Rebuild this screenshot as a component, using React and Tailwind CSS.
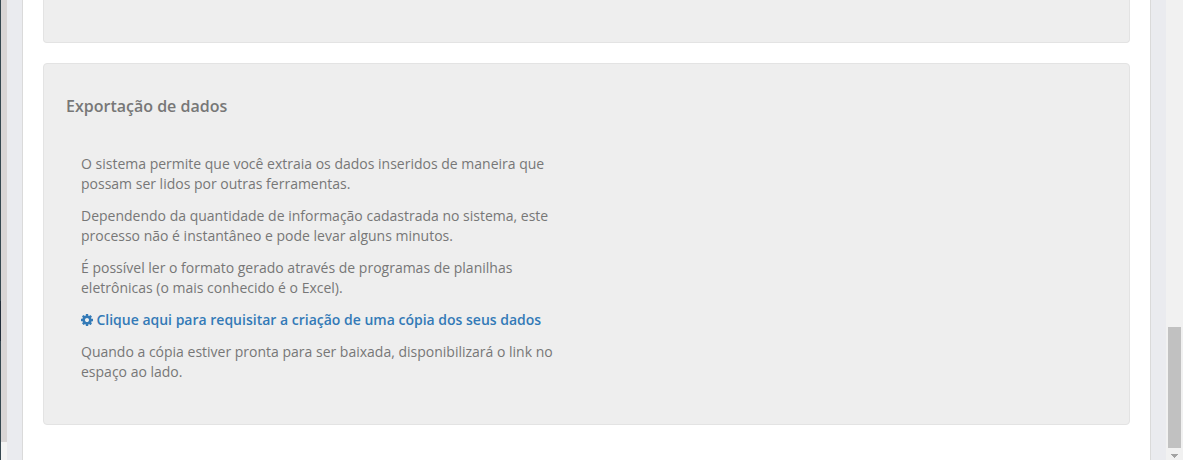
const paragraphs = [
  ["O sistema permite que você extraia os dados inseridos de maneira que", "possam ser lidos por outras ferramentas."],
  ["Dependendo da quantidade de informação cadastrada no sistema, este", "processo não é instantâneo e pode levar alguns minutos."],
  ["É possível ler o formato gerado através de programas de planilhas", "eletrônicas (o mais conhecido é o Excel)."],
];

function Paragraph({ lines }) {
  return (
    <p className="mb-3 whitespace-nowrap">
      {lines[0]}
      <br />
      {lines[1]}
    </p>
  );
}

function GearIcon({ className }) {
  return (
    <svg className={className} viewBox="0 128 1536 1536" fill="currentColor" aria-hidden="true">
      <path d="M1024 896q0-106-75-181t-181-75-181 75-75 181 75 181 181 75 181-75 75-181zm512-109v222q0 12-8 23t-20 13l-185 28q-19 54-39 91 35 50 107 138 10 12 10 25t-9 23q-27 37-99 108t-94 71q-12 0-26-9l-138-108q-44 23-91 38-16 136-29 186-7 28-36 28h-222q-14 0-24.5-8.5t-11.5-21.5l-28-184q-49-16-90-37l-141 107q-10 9-25 9-14 0-25-11-126-114-165-168-7-10-7-23 0-12 8-23 15-21 51-66.5t54-70.5q-27-50-41-99l-183-27q-13-2-21-12.5t-8-23.5v-222q0-12 8-23t19-13l186-28q14-46 39-92-40-57-107-138-10-12-10-24 0-10 9-23 26-36 98.5-107.5t94.5-71.5q13 0 26 10l138 107q44-23 91-38 16-136 29-186 7-28 36-28h222q14 0 24.5 8.5t11.5 21.5l28 184q49 16 90 37l142-107q9-9 24-9 13 0 25 10 129 119 165 170 7 8 7 22 0 12-8 23-15 21-51 66.5t-54 70.5q26 50 41 98l183 28q13 2 21 12.5t8 23.5z" />
    </svg>
  );
}

export default function App() {
  return (
    <div className="flex h-[460px] w-[1183px] overflow-hidden bg-[#eaebef] font-['Open_Sans',sans-serif] text-sm leading-5 text-[#777777]">
      <div className="flex w-px shrink-0 flex-col bg-[#364750]">
        <div className="mt-[301px] h-10 bg-[#222d3a]" />
      </div>
      <div className="flex w-[6px] shrink-0 flex-col bg-[#f4f4f4]">
        <div className="h-[442px] bg-[#d9d5d5]" />
      </div>
      <div className="w-[15px] shrink-0" />
      <main className="w-[1129px] shrink-0 border-x border-[#dadada] bg-white px-5">
        <div className="h-[43px] w-[1087px] rounded-b-[4px] border border-t-0 border-[#e3e3e3] bg-[#eeeeee]" />
        <section className="mt-5 h-[362px] w-[1087px] rounded-[4px] border border-[#e3e3e3] bg-[#eeeeee] px-[22px] pt-[31px]">
          <h2 className="text-base leading-[22px] font-semibold">Exportação de dados</h2>
          <div className="mt-[37px] px-[15px]">
            {paragraphs.map((lines) => (
              <Paragraph key={lines[0]} lines={lines} />
            ))}
            <a className="mb-3 flex items-center font-semibold whitespace-nowrap text-[#337ab7]">
              <GearIcon className="mr-[3.4px] size-3" />
              Clique aqui para requisitar a criação de uma cópia dos seus dados
            </a>
            <Paragraph lines={["Quando a cópia estiver pronta para ser baixada, disponibilizará o link no", "espaço ao lado."]} />
          </div>
        </section>
      </main>
      <div className="w-[15px] shrink-0" />
      <div className="flex w-[17px] shrink-0 flex-col items-center bg-[#f1f1f1] pt-[327px]">
        <div className="h-[121px] w-[13px] bg-[#c1c1c1]" />
        <svg className="mt-[6px]" width="7" height="4" viewBox="0 0 7 4" shapeRendering="crispEdges">
          <path d="M0 0h7v1H6v1H5v1H4v1H3V3H2V2H1V1H0z" fill="#a3a3a3" />
        </svg>
      </div>
    </div>
  );
}
